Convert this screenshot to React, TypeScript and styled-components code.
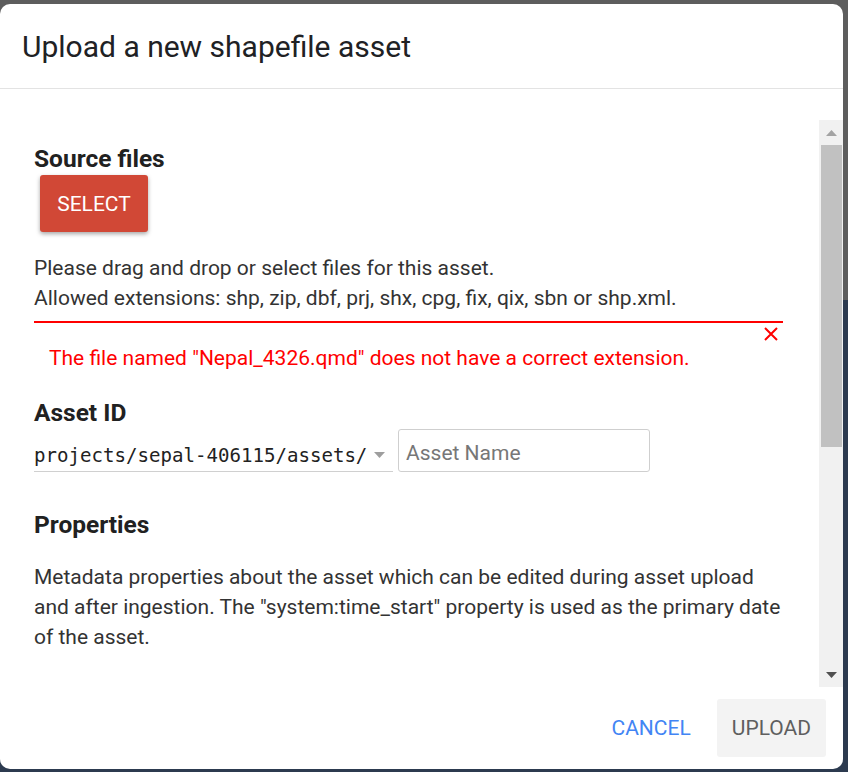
import React from "react";
import styled, { createGlobalStyle } from "styled-components";

const GlobalStyle = createGlobalStyle`
  html, body {
    margin: 0;
    padding: 0;
    height: 772px;
    overflow: hidden;
    font-family: Roboto, "Noto Sans", Arial, sans-serif;
    background: #5d5d5d;
  }
  * { box-sizing: border-box; }
`;

const Backdrop = styled.div`
  height: 772px;
  padding-top: 4px;
  background: linear-gradient(to bottom, #5d5d5d 0, #5d5d5d 300px, #2c3a4f 300px);
`;

const Dialog = styled.div`
  width: 843px;
  height: 765px;
  background: #fff;
  border-radius: 10px;
  display: flex;
  flex-direction: column;
  overflow: hidden;
`;

const Header = styled.div`
  height: 85px;
  flex: none;
  display: flex;
  align-items: center;
  padding-left: 22px;
  border-bottom: 1px solid #e3e3e3;
`;

const Title = styled.h1`
  margin: 0;
  font-size: 30px;
  font-weight: 400;
  color: #202124;
`;

const Body = styled.div`
  flex: 1;
  display: flex;
  padding-top: 31px;
  min-height: 0;
`;

const Content = styled.div`
  flex: 1;
  overflow: hidden;
  padding: 26px 36px 0 34px;
`;

const SectionTitle = styled.h2<{ $top?: number }>`
  margin: ${(p) => p.$top ?? 0}px 0 0;
  font-size: 24.5px;
  line-height: 26px;
  font-weight: 700;
  color: #212121;
`;

const SelectButton = styled.button`
  margin: 3px 0 0 6px;
  height: 57px;
  width: 108px;
  border: none;
  border-radius: 3px;
  background: #d14836;
  color: #fff;
  font-family: Roboto, Arial, sans-serif;
  font-size: 21px;
  box-shadow: 0 2px 4px rgba(0, 0, 0, 0.35);
  display: block;
`;

const Para = styled.p<{ $top: number }>`
  margin: ${(p) => p.$top}px 0 0;
  font-size: 21px;
  line-height: 30px;
  color: #333;
`;

const ErrorLine = styled.div`
  margin-top: 8px;
  height: 2px;
  background: #ff0000;
`;

const CloseRow = styled.div`
  display: flex;
  justify-content: flex-end;
  padding: 2px 5px 0 0;
  height: 20px;
  align-items: center;
`;

const ErrorText = styled.div`
  padding-left: 15px;
  font-size: 21px;
  line-height: 30px;
  color: #ff0000;
`;

const IdRow = styled.div`
  margin-top: 3px;
  display: flex;
  align-items: stretch;
  gap: 5px;
`;

const SelectBox = styled.div`
  width: 359px;
  display: flex;
  align-items: center;
  justify-content: space-between;
  border-bottom: 1px solid #d0d0d0;
  padding-right: 8px;
  font-family: "DejaVu Sans Mono", "Liberation Mono", monospace;
  font-size: 19.1px;
  color: #222;
  padding-top: 10px;
`;

const NameInput = styled.input`
  width: 252px;
  height: 43px;
  border: 1px solid #cfcfcf;
  border-radius: 3px;
  padding: 4px 7px 0;
  font-family: Roboto, Arial, sans-serif;
  font-size: 21px;
  color: #333;
  outline: none;
  &::placeholder { color: #777; }
`;

const ScrollBar = styled.div`
  width: 24px;
  flex: none;
  background: #f1f1f1;
  display: flex;
  flex-direction: column;
  align-items: center;
  height: 567px;
`;

const ArrowCell = styled.div`
  height: 25px;
  width: 100%;
  display: flex;
  align-items: center;
  justify-content: center;
`;

const Thumb = styled.div`
  width: 21px;
  height: 302px;
  background: #c1c1c1;
`;

const Track = styled.div`
  flex: 1;
`;

const Footer = styled.div`
  flex: none;
  display: flex;
  justify-content: flex-end;
  gap: 11px;
  padding: 12px 17px 12px 0;
`;

const FooterButton = styled.button<{ $primary?: boolean }>`
  height: 58px;
  padding: 0 15px;
  border: none;
  border-radius: 3px;
  font-family: Roboto, Arial, sans-serif;
  font-size: 21px;
  background: ${(p) => (p.$primary ? "#f3f3f3" : "transparent")};
  color: ${(p) => (p.$primary ? "#5f5f5f" : "#4285f4")};
`;

const Tri = ({ up, color }: { up?: boolean; color: string }) => (
  <svg width="11" height="6" viewBox="0 0 11 6">
    <polygon points={up ? "0,6 11,6 5.5,0" : "0,0 11,0 5.5,6"} fill={color} />
  </svg>
);

export default function App() {
  return (
    <>
      <GlobalStyle />
      <Backdrop>
        <Dialog>
          <Header>
            <Title>Upload a new shapefile asset</Title>
          </Header>
          <Body>
            <Content>
              <SectionTitle>Source files</SectionTitle>
              <SelectButton>SELECT</SelectButton>
              <Para $top={21}>
                Please drag and drop or select files for this asset.
                <br />
                Allowed extensions: shp, zip, dbf, prj, shx, cpg, fix, qix, sbn or shp.xml.
              </Para>
              <ErrorLine />
              <CloseRow>
                <svg width="14" height="14" viewBox="0 0 14 14">
                  <path d="M1 1 L13 13 M13 1 L1 13" stroke="#ff0000" strokeWidth="2" />
                </svg>
              </CloseRow>
              <ErrorText>The file named "Nepal_4326.qmd" does not have a correct extension.</ErrorText>
              <SectionTitle $top={27}>Asset ID</SectionTitle>
              <IdRow>
                <SelectBox>
                  <span>projects/sepal-406115/assets/</span>
                  <Tri color="#9e9e9e" />
                </SelectBox>
                <NameInput placeholder="Asset Name" />
              </IdRow>
              <SectionTitle $top={40}>Properties</SectionTitle>
              <Para $top={24}>
                Metadata properties about the asset which can be edited during asset upload and after
                ingestion. The "system:time_start" property is used as the primary date of the asset.
              </Para>
            </Content>
            <ScrollBar>
              <ArrowCell>
                <Tri up color="#a3a3a3" />
              </ArrowCell>
              <Thumb />
              <Track />
              <ArrowCell>
                <Tri color="#505050" />
              </ArrowCell>
            </ScrollBar>
          </Body>
          <Footer>
            <FooterButton>CANCEL</FooterButton>
            <FooterButton $primary>UPLOAD</FooterButton>
          </Footer>
        </Dialog>
      </Backdrop>
    </>
  );
}
